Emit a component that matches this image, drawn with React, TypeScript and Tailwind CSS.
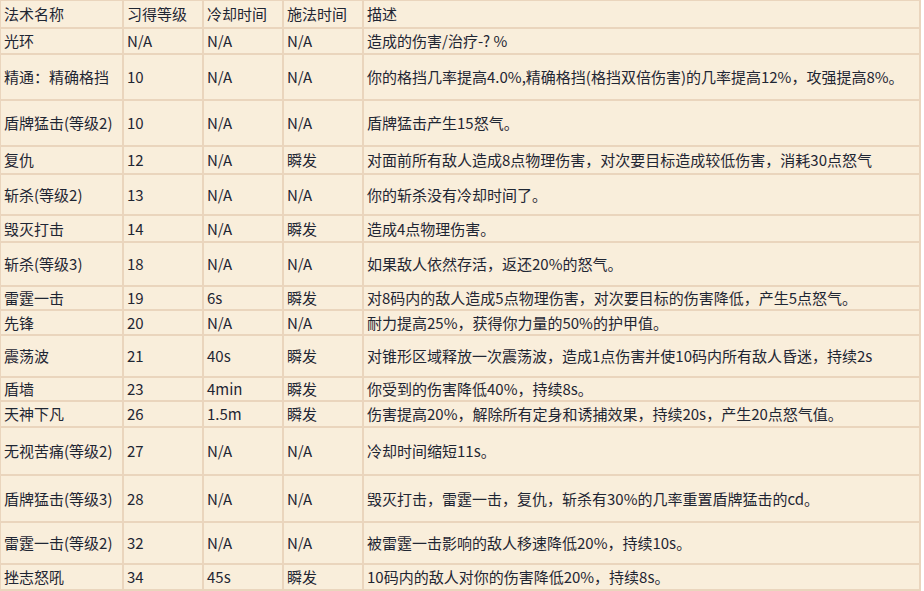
const rows: [string, string, string, string, string, number][] = [
  ["光环", "N/A", "N/A", "N/A", "造成的伤害/治疗-? %", 26],
  ["精通：精确格挡", "10", "N/A", "N/A", "你的格挡几率提高4.0%,精确格挡(格挡双倍伤害)的几率提高12%，攻强提高8%。", 46],
  ["盾牌猛击(等级2)", "10", "N/A", "N/A", "盾牌猛击产生15怒气。", 46],
  ["复仇", "12", "N/A", "瞬发", "对面前所有敌人造成8点物理伤害，对次要目标造成较低伤害，消耗30点怒气", 28],
  ["斩杀(等级2)", "13", "N/A", "N/A", "你的斩杀没有冷却时间了。", 41],
  ["毁灭打击", "14", "N/A", "瞬发", "造成4点物理伤害。", 27],
  ["斩杀(等级3)", "18", "N/A", "N/A", "如果敌人依然存活，返还20%的怒气。", 44],
  ["雷霆一击", "19", "6s", "瞬发", "对8码内的敌人造成5点物理伤害，对次要目标的伤害降低，产生5点怒气。", 24],
  ["先锋", "20", "N/A", "N/A", "耐力提高25%，获得你力量的50%的护甲值。", 25],
  ["震荡波", "21", "40s", "瞬发", "对锥形区域释放一次震荡波，造成1点伤害并使10码内所有敌人昏迷，持续2s", 42],
  ["盾墙", "23", "4min", "瞬发", "你受到的伤害降低40%，持续8s。", 24],
  ["天神下凡", "26", "1.5m", "瞬发", "伤害提高20%，解除所有定身和诱捕效果，持续20s，产生20点怒气值。", 26],
  ["无视苦痛(等级2)", "27", "N/A", "N/A", "冷却时间缩短11s。", 48],
  ["盾牌猛击(等级3)", "28", "N/A", "N/A", "毁灭打击，雷霆一击，复仇，斩杀有30%的几率重置盾牌猛击的cd。", 47],
  ["雷霆一击(等级2)", "32", "N/A", "N/A", "被雷霆一击影响的敌人移速降低20%，持续10s。", 42],
  ["挫志怒吼", "34", "45s", "瞬发", "10码内的敌人对你的伤害降低20%，持续8s。", 26],
];

export default function App() {
  const td = "border-2 border-[#ead5bd] px-[3px] align-middle leading-[20px]";
  return (
    <div className="w-[924px] h-[591px] overflow-hidden bg-white text-[15px] text-[#1f2633]" style={{ fontFamily: '"Noto Sans CJK SC",sans-serif' }}>
      <table className="border-collapse bg-[#f9eedb] w-[922px] table-fixed -mt-[1px] -ml-[1px]">
        <colgroup>
          <col className="w-[123px]" />
          <col className="w-[80px]" />
          <col className="w-[80px]" />
          <col className="w-[80px]" />
          <col />
        </colgroup>
        <tbody>
          <tr className="h-[28px]">
            {["法术名称", "习得等级", "冷却时间", "施法时间", "描述"].map((h) => (
              <td key={h} className={td}>{h}</td>
            ))}
          </tr>
          {rows.map((r) => (
            <tr key={r[0]} style={{ height: r[5] }}>
              <td className={td + " whitespace-nowrap overflow-hidden"}>{r[0]}</td>
              <td className={td}>{r[1]}</td>
              <td className={td}>{r[2]}</td>
              <td className={td}>{r[3]}</td>
              <td className={td}>{r[4]}</td>
            </tr>
          ))}
          <tr className="h-[10px]"><td className={td}></td><td className={td}></td><td className={td}></td><td className={td}></td><td className={td}></td></tr>
        </tbody>
      </table>
    </div>
  );
}
